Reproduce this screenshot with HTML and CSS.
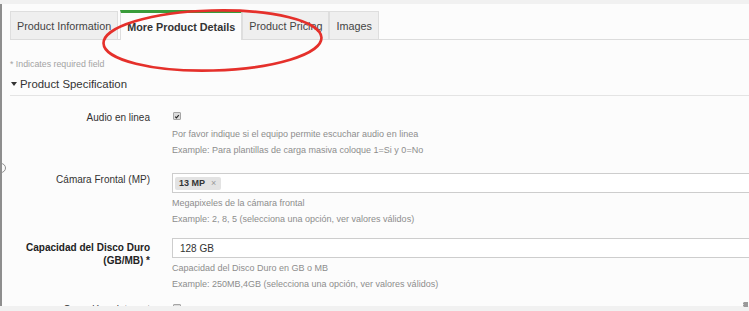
FILE: index.html
```html
<!DOCTYPE html>
<html lang="es">
<head>
<meta charset="utf-8">
<title>More Product Details</title>
<link rel="stylesheet" href="styles.css">
</head>
<body>
<div class="frame">
  <span class="edge-handle"></span>
  <ul class="tabs">
    <li class="tab">Product Information</li>
    <li class="tab active">More Product Details</li>
    <li class="tab">Product Pricing</li>
    <li class="tab">Images</li>
  </ul>
  <p class="required-note">* Indicates required field</p>
  <h2 class="section-title"><span class="caret"></span>Product Specification</h2>
  <div class="form">
    <div class="row row-check">
      <label class="label">Audio en linea</label>
      <div class="field">
        <div class="control"><span class="checkbox"><svg viewBox="0 0 8 8" width="7" height="7"><path d="M1.6 4.2 L3.2 5.8 L6.4 2.2" fill="none" stroke="#222" stroke-width="1.5"/></svg></span></div>
        <p class="help">Por favor indique si el equipo permite escuchar audio en linea</p>
        <p class="help">Example: Para plantillas de carga masiva coloque 1=Si y 0=No</p>
      </div>
    </div>
    <div class="row row-tag">
      <label class="label">Cámara Frontal (MP)</label>
      <div class="field">
        <div class="input"><span class="tag">13 MP<span class="tag-x">×</span></span></div>
        <p class="help">Megapixeles de la cámara frontal</p>
        <p class="help">Example: 2, 8, 5 (selecciona una opción, ver valores válidos)</p>
      </div>
    </div>
    <div class="row row-required">
      <label class="label bold">Capacidad del Disco Duro (GB/MB) *</label>
      <div class="field">
        <div class="input text-input">128 GB</div>
        <p class="help">Capacidad del Disco Duro en GB o MB</p>
        <p class="help">Example: 250MB,4GB (selecciona una opción, ver valores válidos)</p>
      </div>
    </div>
    <div class="row row-check last">
      <label class="label">Conexión a internet</label>
      <div class="field">
        <div class="control"><span class="checkbox"><svg viewBox="0 0 8 8" width="7" height="7"><path d="M1.6 4.2 L3.2 5.8 L6.4 2.2" fill="none" stroke="#222" stroke-width="1.5"/></svg></span></div>
      </div>
    </div>
  </div>
</div>
<span class="grip"></span>
<svg class="annotation" width="749" height="311" viewBox="0 0 749 311">
  <ellipse cx="212.5" cy="40.5" rx="109" ry="30" transform="rotate(-1.5 212.5 40.5)" fill="none" stroke="#e5302b" stroke-width="2.6"/>
</svg>
</body>
</html>
```
FILE: styles.css
```css
html, body {
  margin: 0;
  padding: 0;
}
body {
  position: relative;
  width: 749px;
  height: 311px;
  overflow: hidden;
  background: #f1f1f1;
  font-family: "Liberation Sans", Arial, sans-serif;
  color: #333;
}
.frame {
  position: relative;
  margin-top: 4px;
  height: 302px;
  border-left: 2px solid #8e8e8e;
  background: #fcfcfc;
  overflow: hidden;
  padding-left: 8px;
}
.edge-handle {
  position: absolute;
  left: -6px;
  top: 159px;
  width: 8px;
  height: 8px;
  border: 1.5px solid #8e8e8e;
  border-radius: 50%;
  background: #fcfcfc;
}
.tabs {
  list-style: none;
  margin: 6px 0 0 0;
  padding: 0;
  display: flex;
  align-items: flex-end;
  border-bottom: 1px solid #dcdcdc;
  height: 29px;
}
.tab {
  box-sizing: border-box;
  height: 28px;
  padding: 1px 6px 0 6px;
  line-height: 26px;
  font-size: 10.8px;
  color: #444;
  background: #efefef;
  border: 1px solid #dedede;
  border-bottom: none;
  white-space: nowrap;
}
.tab:first-child {
  margin-right: 2px;
}
.tab.active {
  height: 30px;
  margin-bottom: -1px;
  background: #fcfcfc;
  border-top: 3px solid #3a9c3a;
  font-weight: bold;
  color: #333;
  padding-top: 1px;
  line-height: 26px;
}
.required-note {
  margin: 18px 0 0 0;
  font-size: 8.8px;
  line-height: 12px;
  color: #a3a3a3;
}
.section-title {
  margin: 7px 0 0 0;
  padding-bottom: 4px;
  font-size: 11.4px;
  line-height: 14px;
  font-weight: normal;
  color: #333;
  border-bottom: 1px solid #e4e4e4;
  display: flex;
  align-items: center;
}
.caret {
  width: 0;
  height: 0;
  border-left: 3px solid transparent;
  border-right: 3px solid transparent;
  border-top: 4px solid #333;
  margin: 0 3px 0 1px;
}
.form {
  padding-top: 14px;
}
.row {
  display: grid;
  grid-template-columns: 140px 600px;
  column-gap: 22px;
  margin-bottom: 11px;
}
.row-check {
  margin-bottom: 15px;
}
.row-required {
  margin-bottom: 10px;
}
.row.last {
  margin-bottom: 0;
}
.label {
  text-align: right;
  font-size: 10px;
  line-height: 13px;
  color: #333;
}
.row-check .label {
  line-height: 16px;
}
.label.bold {
  font-weight: bold;
  padding-top: 2.5px;
  color: #222;
}
.field {
  min-width: 0;
}
.control {
  height: 11px;
}
.checkbox {
  display: flex;
  align-items: center;
  justify-content: center;
  box-sizing: border-box;
  width: 8px;
  height: 8px;
  margin-top: 2px;
  margin-left: 1px;
  background: #dcdcdc;
  border: 1px solid #a5a5a5;
  border-radius: 1px;
}
.checkbox svg {
  display: block;
}
.help {
  margin: 0;
  font-size: 9px;
  line-height: 15.5px;
  color: #8d8d8d;
  white-space: nowrap;
}
.control + .help {
  margin-top: 4px;
}
.input {
  box-sizing: border-box;
  height: 20px;
  border: 1px solid #cdcdcd;
  background: #fff;
  display: flex;
  align-items: center;
  padding-left: 2px;
}
.input + .help {
  margin-top: 3px;
}
.text-input {
  padding-left: 7px;
  font-size: 10px;
  color: #333;
}
.tag {
  display: inline-flex;
  align-items: center;
  height: 13px;
  padding: 0 5px 0 4px;
  background: #e3e3e3;
  border-radius: 2px;
  font-size: 9px;
  font-weight: bold;
  color: #333;
}
.tag-x {
  margin-left: 6px;
  font-weight: normal;
  color: #999;
  font-size: 9px;
}
.grip {
  position: absolute;
  right: 1px;
  top: 302px;
  width: 4px;
  height: 5px;
  background: #9a9a9a;
  border-left: 1px dotted #ccc;
}
.annotation {
  position: absolute;
  left: 0;
  top: 0;
  pointer-events: none;
}
```
